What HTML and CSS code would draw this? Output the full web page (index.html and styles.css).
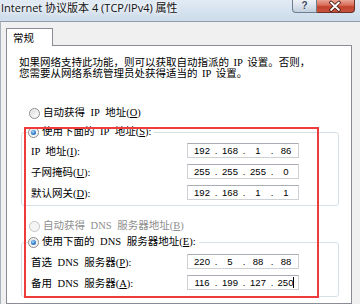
FILE: index.html
```html
<!DOCTYPE html>
<html lang="zh-CN">
<head>
<meta charset="utf-8">
<link rel="stylesheet" href="styles.css">
</head>
<body>
<div class="window">
  <div class="titlebar">
    <span class="title">Internet 协议版本 4 (TCP/IPv4) 属性</span>
    <div class="caption-buttons">
      <div class="btn-help">?</div>
      <div class="btn-close">
        <svg width="38" height="13" viewBox="0 0 38 13">
          <path d="M15 2.5 L23 10 M23 2.5 L15 10" stroke="#4a1d15" stroke-width="3.6" stroke-linecap="round" fill="none"/>
          <path d="M15 2.5 L23 10 M23 2.5 L15 10" stroke="#ffffff" stroke-width="1.8" stroke-linecap="round" fill="none"/>
        </svg>
      </div>
    </div>
  </div>
  <div class="client">
    <div class="tabs"><div class="tab">常规</div></div>
    <div class="panel">
      <p class="desc">如果网络支持此功能，则可以获取自动指派的 IP 设置。否则，<br>您需要从网络系统管理员处获得适当的 IP 设置。</p>
      <div class="radio-row"><span class="radio"></span><span>自动获得 IP 地址(<u>O</u>)</span></div>
      <fieldset class="group">
        <legend class="legend"><span class="radio checked"></span><span>使用下面的 IP 地址(<u>S</u>):</span></legend>
        <div class="rows">
          <div class="field-row"><span class="label">IP 地址(<u>I</u>):</span>
            <div class="ipbox"><span class="oct">192</span><span class="dot">.</span><span class="oct">168</span><span class="dot">.</span><span class="oct">1</span><span class="dot">.</span><span class="oct">86</span></div></div>
          <div class="field-row"><span class="label">子网掩码(<u>U</u>):</span>
            <div class="ipbox"><span class="oct">255</span><span class="dot">.</span><span class="oct">255</span><span class="dot">.</span><span class="oct">255</span><span class="dot">.</span><span class="oct">0</span></div></div>
          <div class="field-row"><span class="label">默认网关(<u>D</u>):</span>
            <div class="ipbox"><span class="oct">192</span><span class="dot">.</span><span class="oct">168</span><span class="dot">.</span><span class="oct">1</span><span class="dot">.</span><span class="oct">1</span></div></div>
        </div>
      </fieldset>
      <div class="radio-row disabled"><span class="radio"></span><span>自动获得 DNS 服务器地址(<u>B</u>)</span></div>
      <fieldset class="group group-dns">
        <legend class="legend"><span class="radio checked"></span><span>使用下面的 DNS 服务器地址(<u>E</u>):</span></legend>
        <div class="rows">
          <div class="field-row"><span class="label">首选 DNS 服务器(<u>P</u>):</span>
            <div class="ipbox"><span class="oct">220</span><span class="dot">.</span><span class="oct">5</span><span class="dot">.</span><span class="oct">88</span><span class="dot">.</span><span class="oct">88</span></div></div>
          <div class="field-row"><span class="label">备用 DNS 服务器(<u>A</u>):</span>
            <div class="ipbox"><span class="oct">116</span><span class="dot">.</span><span class="oct">199</span><span class="dot">.</span><span class="oct">127</span><span class="dot">.</span><span class="oct">250<span class="caret"></span></span></div></div>
        </div>
      </fieldset>
      <div class="annotation"></div>
    </div>
  </div>
</div>
</body>
</html>
```

FILE: styles.css
```css
* { box-sizing: border-box; }

html, body {
  margin: 0;
  width: 360px;
  height: 304px;
  overflow: hidden;
}

body {
  background: #f0f0f0;
  font-family: "Liberation Serif", "Noto Sans CJK SC", sans-serif;
  font-size: 10.5px;
  color: #000;
}

.window {
  display: flex;
  flex-direction: column;
  height: 304px;
}

.titlebar {
  height: 21px;
  flex: none;
  display: flex;
  align-items: flex-start;
  background: linear-gradient(to bottom, #e2ebf5 0%, #d4e1ee 60%, #cddbea 100%);
}

.title {
  font-family: "Open Sans", "Noto Sans CJK SC", sans-serif;
  font-size: 11px;
  line-height: 16px;
  padding-left: 1px;
  color: #111;
  white-space: nowrap;
  text-shadow: 0 0 4px #fff, 0 0 6px #fff;
}

.caption-buttons {
  margin-left: auto;
  margin-right: 5px;
  display: flex;
}

.btn-help {
  width: 25px;
  height: 13px;
  border: 1px solid #6e7e90;
  border-top: none;
  border-radius: 0 0 0 4px;
  background: linear-gradient(to bottom, #eef2f7 0%, #d9e2ec 50%, #c3cfdd 100%);
  font-family: "Liberation Sans", sans-serif;
  font-weight: bold;
  font-size: 10px;
  line-height: 12px;
  text-align: center;
  color: #394b5e;
  text-shadow: 0 0 2px #fff;
}

.btn-close {
  width: 38px;
  height: 13px;
  border: 1px solid #6b3027;
  border-top: none;
  border-left: none;
  border-radius: 0 0 4px 0;
  background: linear-gradient(to bottom, #eaa596 0%, #d76a55 45%, #c2432d 55%, #c8523a 100%);
  display: flex;
}

.btn-close svg { display: block; margin-left: -1px; }

.client {
  flex: 1;
  border-top: 1px solid #8f9cab;
  border-left: 1px solid #a9b2bc;
  background: #f0f0f0;
  padding: 6px 0 0 5px;
  display: flex;
  flex-direction: column;
}

.tabs {
  display: flex;
  margin-bottom: -1px;
  position: relative;
  z-index: 1;
}

.tab {
  width: 47px;
  height: 18px;
  border: 1px solid #898c95;
  border-bottom: none;
  background: #fff;
  font-family: "Noto Sans CJK SC", sans-serif;
  font-size: 10.5px;
  line-height: 17px;
  padding-left: 6px;
}

.panel {
  position: relative;
  width: 346px;
  flex: 1;
  border: 1px solid #898c95;
  background: #fff;
}

.desc {
  margin: 0;
  padding: 11px 0 0 12px;
  line-height: 11px;
  white-space: nowrap;
  word-spacing: 2px;
}

.radio-row {
  display: flex;
  align-items: center;
  gap: 3px;
  height: 12px;
  line-height: 12px;
  margin: 28px 0 0 22px;
  white-space: nowrap;
  word-spacing: 3px;
}

.radio-row.disabled {
  margin-top: 14px;
  color: #8e8e8e;
}

.radio {
  flex: none;
  width: 11px;
  height: 11px;
  border-radius: 50%;
  border: 1px solid #8b8b8b;
  background: linear-gradient(135deg, #d6d6d6 0%, #f2f2f2 60%, #ffffff 100%);
  box-shadow: inset 0 0 0 1px #f7f7f7;
  display: inline-flex;
  align-items: center;
  justify-content: center;
}

.radio.checked::after {
  content: "";
  width: 5px;
  height: 5px;
  border-radius: 50%;
  background: radial-gradient(circle at 40% 35%, #b7e1ff 0%, #3f8ad6 45%, #1b4f95 100%);
}

.disabled .radio {
  border-color: #c2c2c2;
  background: #f4f4f4;
}

.group {
  margin: 7px 12px 0 14px;
  border: 1px solid #d5dfe5;
  border-radius: 3px;
  padding: 5px 0 5px 6px;
  min-width: 0;
}

.group-dns {
  margin-top: 4px;
  padding-top: 6px;
  padding-bottom: 6px;
}

.legend {
  display: flex;
  align-items: center;
  gap: 3px;
  height: 12px;
  line-height: 12px;
  padding: 0 3px 0 0;
  white-space: nowrap;
  word-spacing: 3px;
  background: #fff;
}

.rows {
  display: flex;
  flex-direction: column;
  gap: 6px;
}

.field-row {
  display: flex;
  align-items: center;
  height: 15px;
  padding-left: 3px;
  white-space: nowrap;
  word-spacing: 3px;
}

.label {
  width: 156px;
  flex: none;
}

.ipbox {
  width: 112px;
  height: 15px;
  border: 1px solid #cdd1d6;
  border-top-color: #a9aeb5;
  display: flex;
  padding-left: 4px;
  font-family: "Liberation Sans", sans-serif;
  font-size: 9.5px;
  line-height: 13px;
  word-spacing: 0;
  background: #fff;
}

.oct {
  width: 20px;
  text-align: center;
}

.dot {
  width: 8px;
  text-align: center;
}

.caret {
  display: inline-block;
  width: 1px;
  height: 11px;
  background: #000;
  vertical-align: -2px;
}

.annotation {
  position: absolute;
  left: 17px;
  top: 81px;
  width: 295px;
  height: 171px;
  border: 2px solid #ee3b3b;
  pointer-events: none;
}
```
